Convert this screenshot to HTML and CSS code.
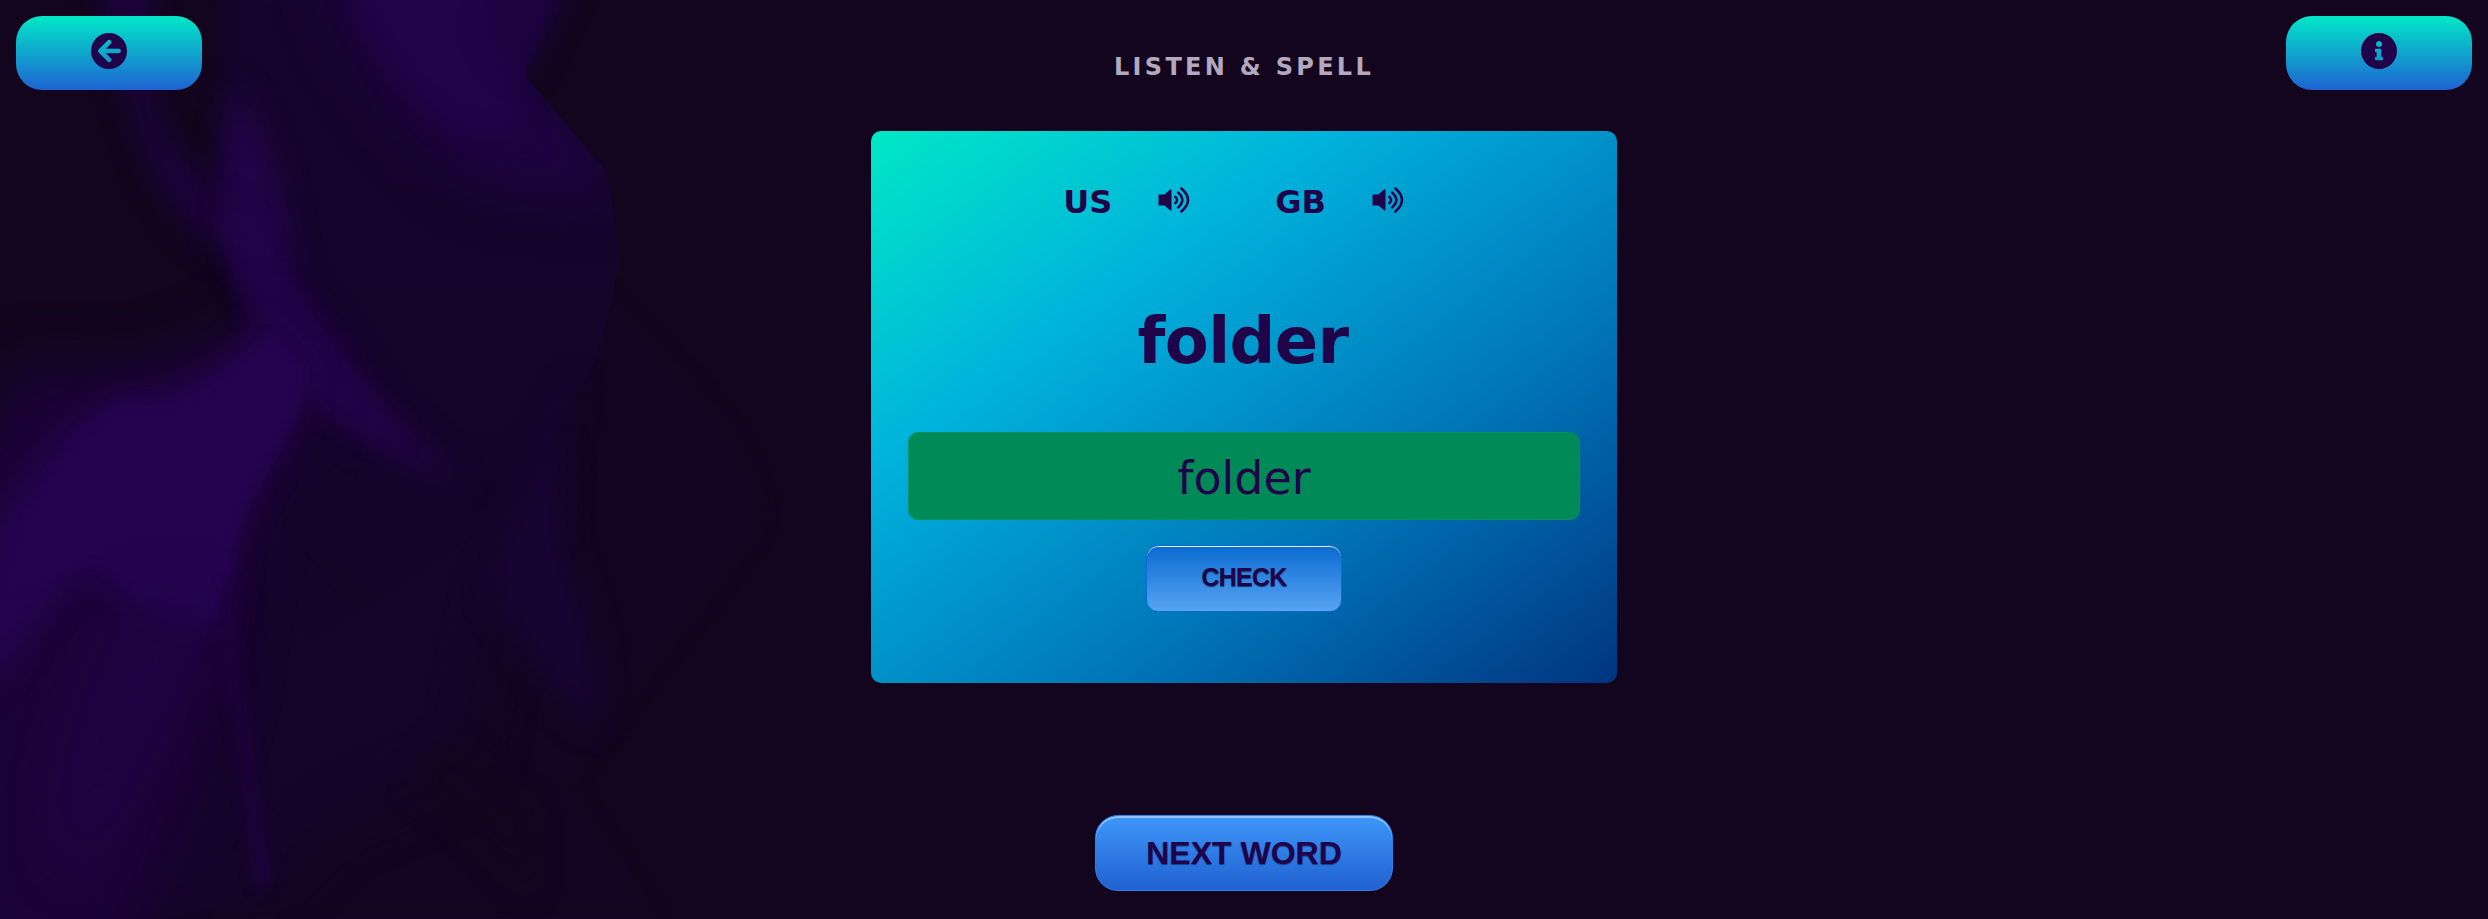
FILE: index.html
```html
<!DOCTYPE html>
<html lang="en">
<head>
<meta charset="utf-8">
<title>Listen &amp; Spell</title>
<link rel="stylesheet" href="styles.css">
</head>
<body>
<svg class="backdrop" viewBox="0 0 1568 1568" preserveAspectRatio="none" color-interpolation-filters="sRGB" aria-hidden="true">
  <defs>
    <filter id="b3" x="-20%" y="-20%" width="140%" height="140%"><feGaussianBlur stdDeviation="2"/></filter>
    <filter id="b10" x="-50%" y="-50%" width="200%" height="200%"><feGaussianBlur stdDeviation="11"/></filter>
    <filter id="b22" x="-50%" y="-50%" width="200%" height="200%"><feGaussianBlur stdDeviation="26"/></filter>
    <filter id="b45" x="-50%" y="-50%" width="200%" height="200%"><feGaussianBlur stdDeviation="50"/></filter>
    <linearGradient id="sheet" x1="0" y1="0" x2="0" y2="1">
      <stop offset="0" stop-color="#17042f"/><stop offset=".5" stop-color="#16042b"/><stop offset="1" stop-color="#140425"/>
    </linearGradient>
    <clipPath id="fold"><path d="M400 -60H1060Q985 60 970 130L1118 292Q1140 380 1140 450Q1110 620 1060 680Q1000 800 900 900L560 1100L380 300Z"/></clipPath>
  </defs>
  <path class="haze" d="M1120 490L1340 710Q1440 860 1410 910L1180 1180L1060 1340L1220 1568H0V1200L560 700Z" filter="url(#b10)"/>
  <path d="M500 700L1000 800Q900 1000 860 1300L600 1400L430 1568H100Z" fill="#16042a" filter="url(#b45)"/>
  <g clip-path="url(#fold)">
    <path d="M420 -100H1300V500L1060 750L700 1150L500 900L400 400Z" fill="url(#sheet)" filter="url(#b22)"/>
    <path d="M600 -60H1060L970 130L1160 330Q1000 330 880 300Q700 200 600 -60Z" fill="#1d0343" filter="url(#b45)"/>
    <path d="M630 -80H900L960 190Q900 250 800 180Q680 80 630 -80Z" fill="#20044a" filter="url(#b22)"/>
  </g>
  <path d="M970 -60H1070L970 130Q920 90 900 40Z" fill="#1c033f" filter="url(#b22)"/>
  <path d="M180 -40H280V180Q330 270 400 330V430Q280 340 240 180Z" fill="#1c033d" filter="url(#b22)"/>
  <path d="M425 140Q520 260 540 470L700 690L860 830Q680 770 560 680L490 550L400 400Z" fill="#200449" filter="url(#b22)"/>
  <path d="M410 340Q460 400 520 510L660 680L740 750Q640 710 560 640L480 540Z" fill="#22044c" filter="url(#b22)"/>
  <path d="M60 620Q250 680 490 540L560 640V740L440 950L400 1200L230 1640H-60V760Z" fill="#1b0339" filter="url(#b45)"/>
  <path d="M490 550L575 620Q560 690 520 760Q440 860 432 950L418 1060Q310 1090 240 1030Q180 950 110 1010L-40 1190V950Q100 720 240 670Q330 700 490 550Z" fill="#24044f" filter="url(#b22)"/>
  <path d="M500 575L560 625Q555 690 520 750Q440 860 428 950L415 1045Q310 1060 250 1010Q180 930 110 970L20 1000Q100 730 240 685Q350 720 500 575Z" fill="#24044f" filter="url(#b10)"/>
  <path d="M435 1000Q445 1150 470 1300L500 1500Q470 1570 455 1420Q440 1240 405 1130L410 1000Z" fill="#1b0339" filter="url(#b10)"/>
  <path d="M400 1040L150 1480Q70 1400 240 1040Z" fill="#1e0345" filter="url(#b45)"/>
  <path d="M1070 640Q1020 780 1045 950Q1120 1120 1100 1240Q1010 1200 900 1000Q940 850 1070 640Z" fill="#180431" filter="url(#b22)"/>
  <path d="M820 1260L980 1390V1520L860 1400L765 1340Z" fill="#12051d" filter="url(#b22)"/>
</svg>

<header class="topbar">
  <button class="pill" aria-label="Back">
    <svg class="pill-icon" viewBox="0 0 36 36">
      <mask id="arrow"><rect width="36" height="36" fill="#fff"/><path d="M18.2 9.2L9.4 18L18.2 26.8M10 18H27.6" fill="none" stroke="#000" stroke-width="4.6" stroke-linecap="round" stroke-linejoin="round"/></mask>
      <circle cx="18" cy="18" r="18" mask="url(#arrow)"/>
    </svg>
  </button>
  <h1 class="title">LISTEN &amp; SPELL</h1>
  <button class="pill" aria-label="Information">
    <svg class="pill-icon" viewBox="8 8 496 496"><path d="M256 8C119.043 8 8 119.083 8 256c0 136.997 111.043 248 248 248s248-111.003 248-248C504 119.083 392.957 8 256 8zm0 110c23.196 0 42 18.804 42 42s-18.804 42-42 42-42-18.804-42-42 18.804-42 42-42zm56 254c0 6.627-5.373 12-12 12h-88c-6.627 0-12-5.373-12-12v-24c0-6.627 5.373-12 12-12h12v-64h-12c-6.627 0-12-5.373-12-12v-24c0-6.627 5.373-12 12-12h64c6.627 0 12 5.373 12 12v100h12c6.627 0 12 5.373 12 12v24z"/></svg>
  </button>
</header>

<main class="main">
  <section class="card">
    <div class="voices">
      <span class="accent">US</span>
      <svg class="speaker speaker-us" viewBox="0 0 32 26"><path d="M1 7.5H6.5L12 2.6Q13.5 1.5 13.5 3.7V22.3Q13.5 24.4 12 23.3L6.5 18.5H1Q.5 18.5 .5 18V8Q.5 7.5 1 7.5Z"/><path class="wave" d="M17.4 9.8Q20.6 13 17.4 16.2M20.2 5.6Q28.4 13 20.2 20.4M23.4 1.5Q36.6 13 23.4 24.5"/></svg>
      <span class="accent">GB</span>
      <svg class="speaker" viewBox="0 0 32 26"><path d="M1 7.5H6.5L12 2.6Q13.5 1.5 13.5 3.7V22.3Q13.5 24.4 12 23.3L6.5 18.5H1Q.5 18.5 .5 18V8Q.5 7.5 1 7.5Z"/><path class="wave" d="M17.4 9.8Q20.6 13 17.4 16.2M20.2 5.6Q28.4 13 20.2 20.4M23.4 1.5Q36.6 13 23.4 24.5"/></svg>
    </div>
    <h2 class="word">folder</h2>
    <input class="answer" type="text" value="folder" aria-label="Your spelling">
    <button class="check">CHECK</button>
  </section>
  <button class="next">NEXT WORD</button>
</main>
</body>
</html>
```
FILE: styles.css
```css
* { box-sizing: border-box; }

body {
  position: relative;
  margin: 0;
  height: 919px;
  overflow: hidden;
  background: #12051d;
  color: #200449;
  font-family: Verdana, "DejaVu Sans", sans-serif;
}

button { padding: 0; color: inherit; cursor: pointer; }

.backdrop {
  position: absolute;
  z-index: -1;
  top: 0;
  left: 0;
  width: 850px;
  height: 919px;
}
.haze { fill: #140421; }

.topbar {
  display: flex;
  justify-content: space-between;
  height: 131px;
  padding: 16px 16px 0;
}

.pill {
  display: flex;
  justify-content: center;
  width: 186px;
  height: 74px;
  padding-top: 17px;
  border: 0;
  border-radius: 26px;
  background: linear-gradient(#00e8c8, #1f62d2);
}
.pill-icon { width: 36px; height: 36px; fill: #200449; }

.title {
  margin: 37px 0 0;
  color: #b3a8bd;
  font-size: 24px;
  line-height: 28px;
  letter-spacing: 3.3px;
}

.main { display: flex; flex-direction: column; align-items: center; }

.card {
  display: flex;
  flex-direction: column;
  align-items: center;
  width: 746px;
  height: 552px;
  padding: 51px 37px 0;
  border-radius: 10px;
  background: linear-gradient(to bottom right, #00e8c6 0%, #00b2dc 31%, #0072b6 68%, #003580 100%);
}

.voices { display: flex; align-items: center; height: 40px; padding-right: 21px; }
.accent { margin-right: 46px; font-size: 32px; font-weight: bold; line-height: 40px; }
.speaker { width: 32px; height: 26px; margin-top: -4px; fill: #200449; }
.speaker-us { margin-right: 85px; }
.wave { fill: none; stroke: #200449; stroke-width: 2.6; stroke-linecap: round; }

.word {
  margin: 82px 0 0;
  padding-right: 2px;
  font-size: 64px;
  line-height: 75px;
  letter-spacing: -0.6px;
}

.answer {
  width: 672px;
  height: 88px;
  margin-top: 53px;
  padding: 4px 0 0;
  border: 1px solid #008f60;
  border-radius: 10px;
  background: #008a58;
  color: #200449;
  font: 46px Verdana, "DejaVu Sans", sans-serif;
  text-align: center;
}

.check {
  width: 196px;
  height: 67px;
  margin-top: 25px;
  padding-bottom: 3px;
  border: 1px solid #0b6bd0;
  border-radius: 12px;
  background: linear-gradient(#0a6bd0, #57a4f2);
  box-shadow: inset 0 1px 0 #e4efff;
  font: bold 25px "Liberation Sans", Arial, sans-serif;
  letter-spacing: -0.8px;
  text-shadow: 0 1px 1px #123a70;
}

.next {
  width: 298px;
  height: 76px;
  margin-top: 132px;
  border: 1px solid #337fed;
  border-radius: 23px;
  background: linear-gradient(#3f97fa, #1f61d0);
  box-shadow: inset 0 2px 0 #94c2ff;
  font: bold 32px "Liberation Sans", Arial, sans-serif;
  text-shadow: 0 1px 1px #173d86;
}
```
